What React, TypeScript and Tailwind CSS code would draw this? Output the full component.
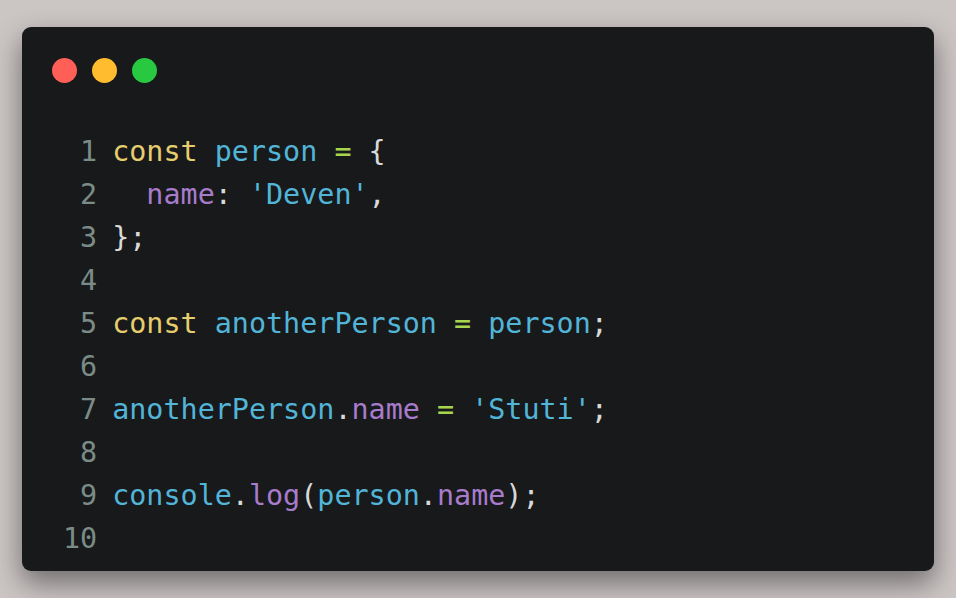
const yellow = 'text-[#e6cd6e]'
const cyan = 'text-[#52b5d8]'
const green = 'text-[#a6d64e]'
const purple = 'text-[#a77ccb]'
const plain = 'text-[#d9d9d9]'

type Tok = [string, string]

const lines: Tok[][] = [
  [[yellow, 'const'], [plain, ' '], [cyan, 'person'], [plain, ' '], [green, '='], [plain, ' {']],
  [[plain, '  '], [purple, 'name'], [plain, ': '], [cyan, "'Deven'"], [plain, ',']],
  [[plain, '};']],
  [],
  [[yellow, 'const'], [plain, ' '], [cyan, 'anotherPerson'], [plain, ' '], [green, '='], [plain, ' '], [cyan, 'person'], [plain, ';']],
  [],
  [[cyan, 'anotherPerson'], [plain, '.'], [purple, 'name'], [plain, ' '], [green, '='], [plain, ' '], [cyan, "'Stuti'"], [plain, ';']],
  [],
  [[cyan, 'console'], [plain, '.'], [purple, 'log'], [plain, '('], [cyan, 'person'], [plain, '.'], [purple, 'name'], [plain, ');']],
  [],
]

export default function App() {
  return (
    <div className="w-[956px] h-[598px] bg-[#cbc5c4] px-[22px] py-[27px]">
      <div className="h-full rounded-[9px] bg-[#18191b] shadow-[0_12px_28px_rgba(0,0,0,0.45)] pl-[41px] pt-[31px]">
        <div className="flex gap-[15px] -ml-[11px]">
          <span className="w-[25px] h-[25px] rounded-full bg-[#ff5f57]" />
          <span className="w-[25px] h-[25px] rounded-full bg-[#febc2e]" />
          <span className="w-[25px] h-[25px] rounded-full bg-[#28c840]" />
        </div>
        <div className="mt-[47px] font-['DejaVu_Sans_Mono',monospace] text-[28.4px] leading-[43px] whitespace-pre">
          {lines.map((toks, i) => (
            <div key={i} className="flex">
              <span className="w-[2ch] text-right text-[#7b8c88]">{i + 1}</span>
              <span className="w-[15px]" />
              <span>
                {toks.map(([c, t], j) => (
                  <span key={j} className={c}>
                    {t}
                  </span>
                ))}
              </span>
            </div>
          ))}
        </div>
      </div>
    </div>
  )
}
